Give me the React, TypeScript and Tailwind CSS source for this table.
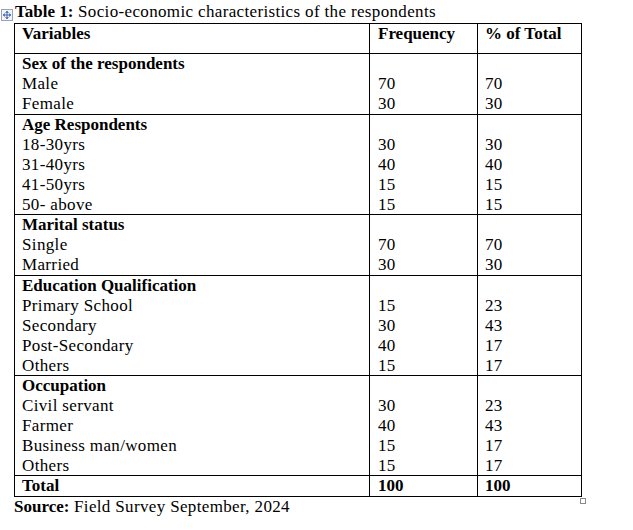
const sections: { title: string; rows: [string, string, string][] }[] = [
  {
    title: "Sex of the respondents",
    rows: [
      ["Male", "70", "70"],
      ["Female", "30", "30"],
    ],
  },
  {
    title: "Age Respondents",
    rows: [
      ["18-30yrs", "30", "30"],
      ["31-40yrs", "40", "40"],
      ["41-50yrs", "15", "15"],
      ["50- above", "15", "15"],
    ],
  },
  {
    title: "Marital status",
    rows: [
      ["Single", "70", "70"],
      ["Married", "30", "30"],
    ],
  },
  {
    title: "Education Qualification",
    rows: [
      ["Primary School", "15", "23"],
      ["Secondary", "30", "43"],
      ["Post-Secondary", "40", "17"],
      ["Others", "15", "17"],
    ],
  },
  {
    title: "Occupation",
    rows: [
      ["Civil servant", "30", "23"],
      ["Farmer", "40", "43"],
      ["Business man/women", "15", "17"],
      ["Others", "15", "17"],
    ],
  },
];

function MoveHandle() {
  return (
    <svg width="12" height="12" viewBox="0 0 12 12" className="block">
      <rect x="0.5" y="0.5" width="11" height="11" fill="#f3f5f9" stroke="#9aa3b3" />
      <g stroke="#3c64b4" strokeWidth="1" fill="#3c64b4">
        <line x1="6" y1="2.5" x2="6" y2="9.5" />
        <line x1="2.5" y1="6" x2="9.5" y2="6" />
        <path d="M6 2 L4.5 3.5 L7.5 3.5 Z" strokeWidth="0.5" />
        <path d="M6 10 L4.5 8.5 L7.5 8.5 Z" strokeWidth="0.5" />
        <path d="M2 6 L3.5 4.5 L3.5 7.5 Z" strokeWidth="0.5" />
        <path d="M10 6 L8.5 4.5 L8.5 7.5 Z" strokeWidth="0.5" />
      </g>
    </svg>
  );
}

// Word's 5-line cells come out a pixel shorter than 5 x 20px
function Line({ text, last, long }: { text: string; last: boolean; long: boolean }) {
  return <div className={last && long ? "h-[19px]" : "h-[20px]"}>{text}</div>;
}

export default function App() {
  return (
    <div
      className="w-[633px] h-[530px] bg-white text-black text-[17px] leading-[20px] tracking-[0.35px] overflow-hidden"
      style={{ fontFamily: '"Liberation Serif", "Times New Roman", serif' }}
    >
      {/* Caption */}
      <div className="flex items-start pt-[2px] h-[23px]">
        <div className="pl-[1px] pt-[7px] w-[15px]">
          <MoveHandle />
        </div>
        <div className="whitespace-nowrap">
          <span className="font-bold tracking-normal">Table 1:</span> Socio-economic characteristics of the respondents
        </div>
      </div>

      {/* Table */}
      <table className="ml-[14px] w-[567px] border-collapse border border-black table-fixed">
        <colgroup>
          <col className="w-[355px]" />
          <col className="w-[108px]" />
          <col className="w-[104px]" />
        </colgroup>
        <thead>
          <tr className="border-b border-black align-top">
            <th className="border-r border-black text-left font-bold tracking-normal pl-[7px] pb-[9px]">Variables</th>
            <th className="border-r border-black text-left font-bold tracking-normal pl-[8px] pb-[9px]">Frequency</th>
            <th className="text-left font-bold tracking-normal pl-[7px] pb-[9px]">% of Total</th>
          </tr>
        </thead>
        <tbody>
          {sections.map((s) => {
            const long = s.rows.length > 3;
            return (
              <tr key={s.title} className="border-b border-black align-top">
                <td className="border-r border-black pl-[7px]">
                  <div className="font-bold tracking-normal h-[20px]">{s.title}</div>
                  {s.rows.map((r, i) => (
                    <Line key={i} text={r[0]} last={i === s.rows.length - 1} long={long} />
                  ))}
                </td>
                <td className="border-r border-black pl-[8px]">
                  <div className="h-[20px]" />
                  {s.rows.map((r, i) => (
                    <Line key={i} text={r[1]} last={i === s.rows.length - 1} long={long} />
                  ))}
                </td>
                <td className="pl-[7px]">
                  <div className="h-[20px]" />
                  {s.rows.map((r, i) => (
                    <Line key={i} text={r[2]} last={i === s.rows.length - 1} long={long} />
                  ))}
                </td>
              </tr>
            );
          })}
          <tr className="font-bold tracking-normal">
            <td className="border-r border-black pl-[7px] h-[20px]">Total</td>
            <td className="border-r border-black pl-[8px]">100</td>
            <td className="pl-[7px]">100</td>
          </tr>
        </tbody>
      </table>

      {/* Resize handle + source */}
      <div className="relative">
        <div className="absolute left-[580px] top-[1px] w-[6px] h-[6px] border border-[#8a8a8a] bg-white" />
        <div className="pl-[14px]">
          <span className="font-bold tracking-normal">Source:</span> Field Survey September, 2024
        </div>
      </div>
    </div>
  );
}
